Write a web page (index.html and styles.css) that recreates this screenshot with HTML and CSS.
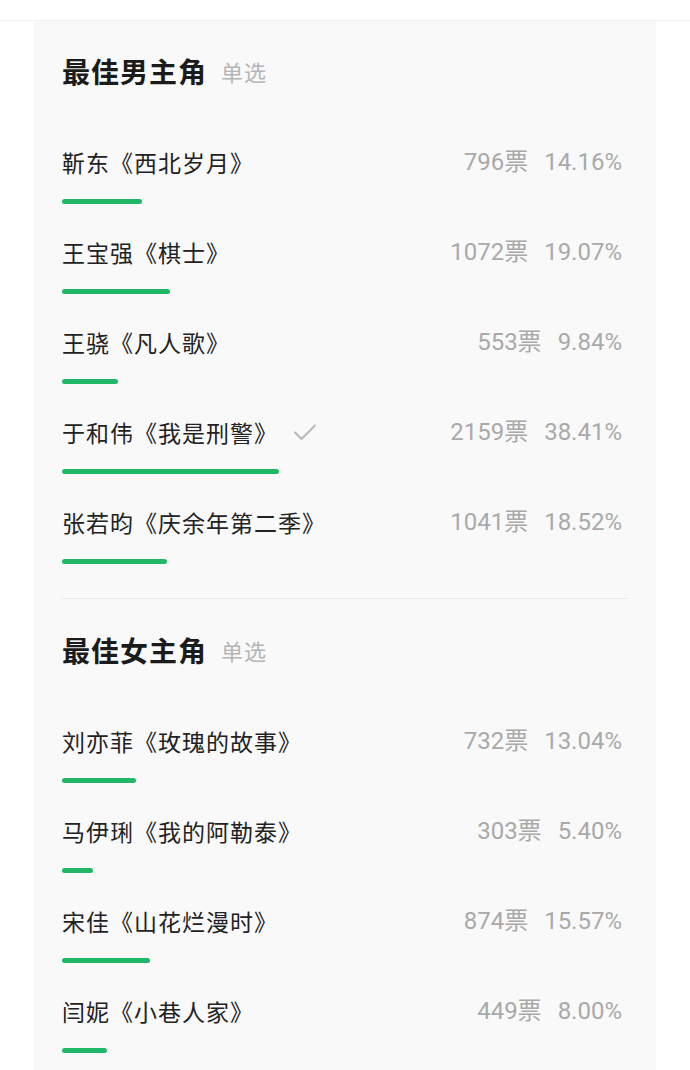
FILE: index.html
```html
<!DOCTYPE html>
<html lang="zh-CN">
<head>
<meta charset="utf-8">
<title>投票</title>
<link rel="stylesheet" href="styles.css">
</head>
<body>
<div class="topbar"></div>
<main class="card">
  <section class="poll">
    <h2 class="poll-title">最佳男主角<span class="poll-type">单选</span></h2>
    <div class="option">
      <div class="option-line"><span class="name">靳东《西北岁月》</span><span class="stats"><span class="votes">796票</span><span class="pct">14.16%</span></span></div>
      <div class="track"><div class="bar" style="width:14.16%"></div></div>
    </div>
    <div class="option">
      <div class="option-line"><span class="name">王宝强《棋士》</span><span class="stats"><span class="votes">1072票</span><span class="pct">19.07%</span></span></div>
      <div class="track"><div class="bar" style="width:19.07%"></div></div>
    </div>
    <div class="option">
      <div class="option-line"><span class="name">王骁《凡人歌》</span><span class="stats"><span class="votes">553票</span><span class="pct">9.84%</span></span></div>
      <div class="track"><div class="bar" style="width:9.84%"></div></div>
    </div>
    <div class="option">
      <div class="option-line"><span class="name">于和伟《我是刑警》<svg class="check" viewBox="0 0 24 18" width="24" height="18"><path d="M2 9.5 L8.5 16 L22 2.5" fill="none" stroke="#b8b8b8" stroke-width="2" stroke-linecap="round" stroke-linejoin="round"/></svg></span><span class="stats"><span class="votes">2159票</span><span class="pct">38.41%</span></span></div>
      <div class="track"><div class="bar" style="width:38.41%"></div></div>
    </div>
    <div class="option">
      <div class="option-line"><span class="name">张若昀《庆余年第二季》</span><span class="stats"><span class="votes">1041票</span><span class="pct">18.52%</span></span></div>
      <div class="track"><div class="bar" style="width:18.52%"></div></div>
    </div>
  </section>
  <section class="poll">
    <h2 class="poll-title">最佳女主角<span class="poll-type">单选</span></h2>
    <div class="option">
      <div class="option-line"><span class="name">刘亦菲《玫瑰的故事》</span><span class="stats"><span class="votes">732票</span><span class="pct">13.04%</span></span></div>
      <div class="track"><div class="bar" style="width:13.04%"></div></div>
    </div>
    <div class="option">
      <div class="option-line"><span class="name">马伊琍《我的阿勒泰》</span><span class="stats"><span class="votes">303票</span><span class="pct">5.40%</span></span></div>
      <div class="track"><div class="bar" style="width:5.40%"></div></div>
    </div>
    <div class="option">
      <div class="option-line"><span class="name">宋佳《山花烂漫时》</span><span class="stats"><span class="votes">874票</span><span class="pct">15.57%</span></span></div>
      <div class="track"><div class="bar" style="width:15.57%"></div></div>
    </div>
    <div class="option">
      <div class="option-line"><span class="name">闫妮《小巷人家》</span><span class="stats"><span class="votes">449票</span><span class="pct">8.00%</span></span></div>
      <div class="track"><div class="bar" style="width:8.00%"></div></div>
    </div>
  </section>
</main>
</body>
</html>
```
FILE: styles.css
```css
* { box-sizing: border-box; }
html, body {
  margin: 0;
  padding: 0;
  background: #ffffff;
}
body {
  font-family: "Noto Sans CJK SC", "Noto Sans", sans-serif;
  height: 1070px;
  overflow: hidden;
}
.topbar {
  height: 21px;
  border-bottom: 1px solid #f1f1f1;
}
.card {
  margin: 0 34px;
  background: #f9f9f9;
  padding: 30px 28px 0;
  min-height: 1100px;
}
.poll + .poll {
  border-top: 1px solid #ebebeb;
  padding-top: 31px;
}
.poll {
  padding-bottom: 2px;
}
.poll-title {
  margin: 0 0 55px;
  height: 40px;
  display: flex;
  align-items: center;
  gap: 14px;
  font-size: 28px;
  font-weight: 700;
  color: #1b1b1b;
  letter-spacing: 1px;
}
.poll-type {
  font-size: 22px;
  font-weight: 400;
  color: #b5b5b5;
  letter-spacing: 1px;
}
.option {
  padding-bottom: 32px;
}
.option-line {
  height: 32px;
  display: flex;
  align-items: center;
  justify-content: space-between;
}
.name {
  display: flex;
  align-items: center;
  font-size: 23px;
  letter-spacing: 1px;
  color: #222222;
  white-space: nowrap;
}
.check {
  margin-left: 15px;
}
.stats {
  display: flex;
  align-items: baseline;
  gap: 16px;
  padding-right: 6px;
  line-height: 32px;
  font-family: "Roboto", "Noto Sans CJK SC", sans-serif;
  font-size: 24px;
  color: #a9a9a9;
}
.votes, .pct { white-space: nowrap; }
.track {
  margin-top: 21px;
  height: 5px;
}
.bar {
  height: 5px;
  border-radius: 3px;
  background: #20b866;
}
```
